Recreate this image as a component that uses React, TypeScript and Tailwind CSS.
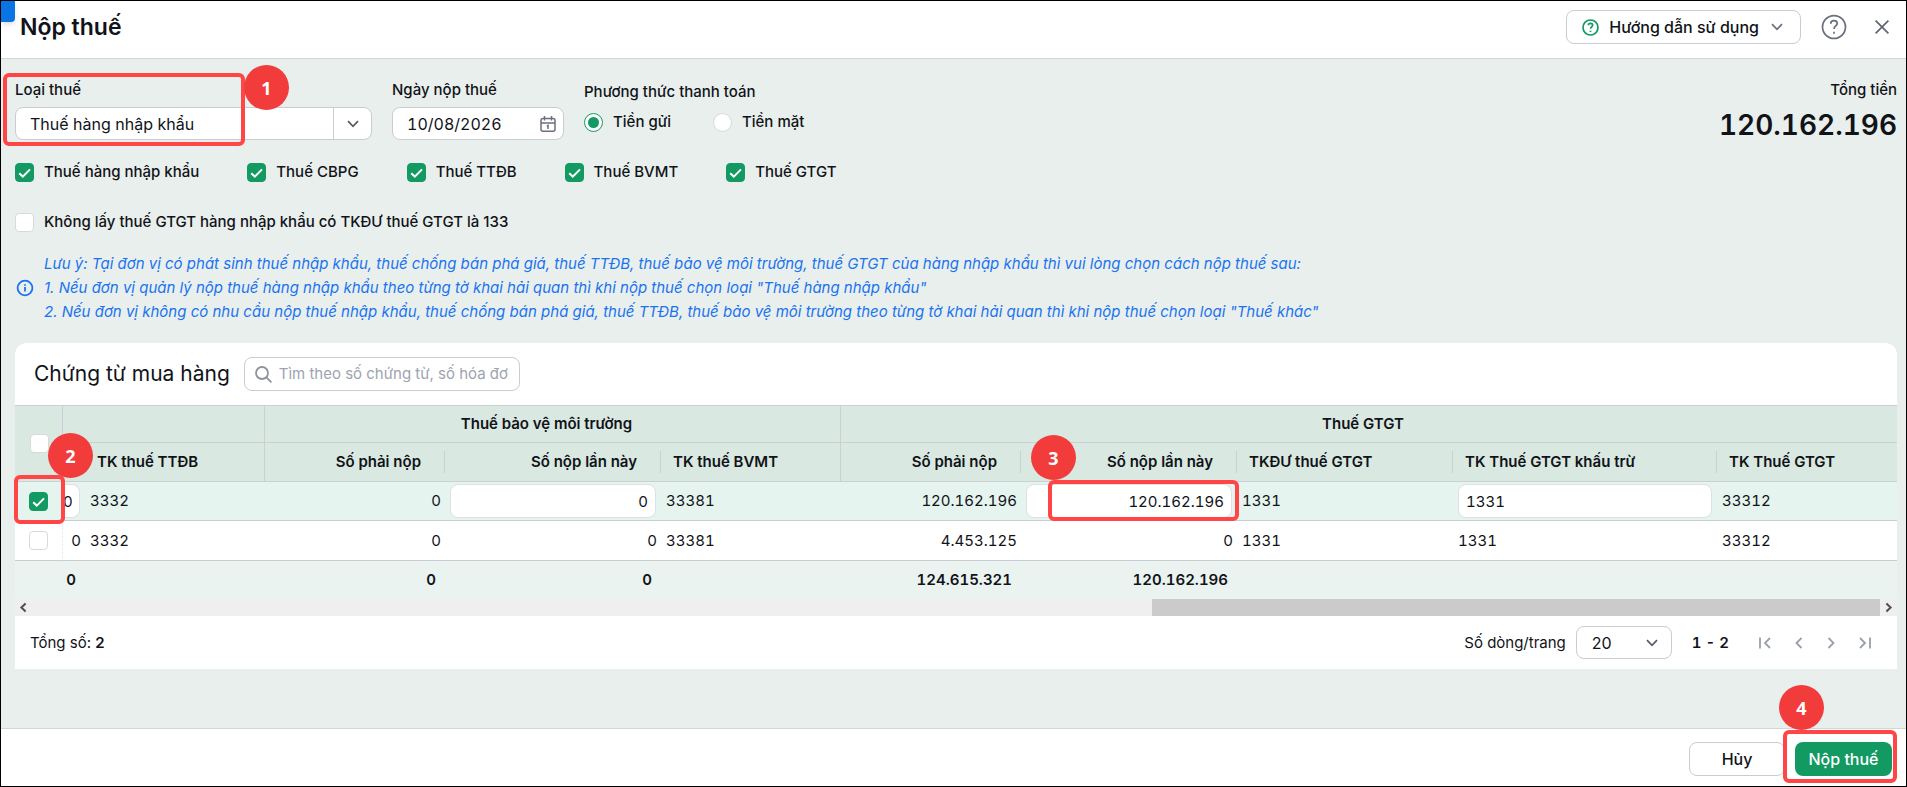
import type { InputHTMLAttributes, ReactNode } from 'react';
import { clsx } from 'clsx';

// Small building blocks

function Checkbox({ label, className, ...props }: { label?: string } & InputHTMLAttributes<HTMLInputElement>) {
  return (
    <label className={clsx('flex w-fit items-center gap-[10px]', className)}>
      <span className="grid size-[19px] shrink-0 place-items-center">
        <input
          type="checkbox"
          className="peer col-start-1 row-start-1 size-[19px] appearance-none rounded border border-[#d5dbd9] bg-white checked:border-[#129a62] checked:bg-[#129a62]"
          {...props}
        />
        <svg
          viewBox="0 0 19 19"
          className="pointer-events-none col-start-1 row-start-1 hidden size-[19px] peer-checked:block"
          fill="none"
          stroke="white"
          strokeWidth="2"
        >
          <path d="M4.2 10.2 7.8 13.6 15 6.4" />
        </svg>
      </span>
      {label && <span>{label}</span>}
    </label>
  );
}

function Radio({ label, ...props }: { label: string } & InputHTMLAttributes<HTMLInputElement>) {
  return (
    <label className="flex items-center gap-[10px]">
      <span className="grid size-[19px] place-items-center">
        <input
          type="radio"
          name="payment"
          className="peer col-start-1 row-start-1 size-[19px] appearance-none rounded-full border border-[#d5dbd9] bg-white checked:border-[#129a62]"
          {...props}
        />
        <span className="pointer-events-none col-start-1 row-start-1 hidden size-[11px] rounded-full bg-[#129a62] peer-checked:block" />
      </span>
      <span>{label}</span>
    </label>
  );
}

function Chevron({ className }: { className?: string }) {
  return (
    <svg viewBox="0 0 12 8" className={clsx('h-2 w-3', className)} fill="none" stroke="currentColor" strokeWidth="1.7">
      <path d="M1 1.2 6 6.3 11 1.2" />
    </svg>
  );
}

function HelpIcon({ className, strokeWidth }: { className: string; strokeWidth: number }) {
  return (
    <svg viewBox="0 0 24 24" className={className} fill="none" stroke="currentColor" strokeWidth={strokeWidth}>
      <circle cx="12" cy="12" r="10.6" />
      <path d="M9 8.9c0-1.7 1.3-2.8 3-2.8s3 1.1 3 2.7c0 2.1-3 2.4-3 5" />
      <path d="M12 16.4v1.9" />
    </svg>
  );
}

function Step({ n, className }: { n: number; className: string }) {
  return (
    <span
      className={clsx(
        "pointer-events-none absolute z-20 grid size-[45px] place-items-center rounded-full bg-[#f23c3c] font-['Open_Sans',sans-serif] text-lg font-bold text-white",
        className,
      )}
    >
      {n}
    </span>
  );
}

function Frame({ className }: { className: string }) {
  return <span className={clsx('pointer-events-none absolute z-10 rounded-md border-4 border-[#ff4545]', className)} />;
}

// Table parts

function GroupHead({ children, span, last }: { children?: ReactNode; span: number; last?: boolean }) {
  return (
    <th colSpan={span} className={clsx('h-[37px] border-b border-[#cdcfd6] font-semibold', !last && 'border-r')}>
      <div className="pr-3 text-center">{children}</div>
    </th>
  );
}

function Head({ children, right, edge = 'short' }: { children: ReactNode; right?: boolean; edge?: 'short' | 'full' | 'none' }) {
  return (
    <th className={clsx('h-[39px] border-b border-[#cdcfd6] p-0 font-semibold', edge === 'full' && 'border-r')}>
      <div
        className={clsx(
          'flex h-[22px] items-center border-[#cdcfd6]',
          right ? 'justify-end pr-[23px]' : 'pl-3',
          edge === 'short' && 'border-r',
        )}
      >
        {children}
      </div>
    </th>
  );
}

function Cell({ children, right }: { children?: ReactNode; right?: boolean }) {
  return (
    <td className={clsx('relative border-b border-[#c9cdd2]', right ? 'pr-1 text-right' : 'pl-[5px]')}>{children}</td>
  );
}

function CellInput({ right, ...props }: { right?: boolean } & InputHTMLAttributes<HTMLInputElement>) {
  return (
    <input
      className={clsx(
        'block h-[34px] w-full rounded-lg border border-[#e0e0e0] bg-white px-[7px] tabular-nums',
        right && 'text-right',
      )}
      {...props}
    />
  );
}

const taxes = ['Thuế hàng nhập khẩu', 'Thuế CBPG', 'Thuế TTĐB', 'Thuế BVMT', 'Thuế GTGT'];

export default function App() {
  return (
    <div className="relative flex min-h-screen flex-col border border-black bg-[#e9efed] font-['Inter',sans-serif] text-[15px] leading-6 text-[#111318]">
      <header className="flex h-[58px] items-center border-b border-[#d2d5d8] bg-white pr-[17px] pb-[5px] pl-[19px]">
        <span className="absolute top-0 left-0 h-[21px] w-[14px] rounded-br bg-[#0b74e5] shadow-md" />
        <h1 className="flex-1 text-[23px] font-semibold">Nộp thuế</h1>
        <button className="flex h-[34px] items-center gap-[10px] rounded-lg border border-[#c9ccd2] bg-white px-[15px] text-base font-medium">
          <HelpIcon className="size-[17px] text-[#129a62]" strokeWidth={2.4} />
          Hướng dẫn sử dụng
          <Chevron className="mx-[2px] text-[#6b7080]" />
        </button>
        <button className="ml-5 text-[#6b7080]" aria-label="Trợ giúp">
          <HelpIcon className="size-[26px]" strokeWidth={1.6} />
        </button>
        <button className="ml-7 text-[#5f6475]" aria-label="Đóng">
          <svg viewBox="0 0 14 14" className="size-[14px]" fill="none" stroke="currentColor" strokeWidth="1.7">
            <path d="M.6.6 13.4 13.4M13.4.6.6 13.4" />
          </svg>
        </button>
      </header>

      <main className="flex-1 pr-[9px] pl-[14px]">
        <section className="flex pt-[19px]">
          <div className="relative w-[357px]">
            <label htmlFor="tax-type" className="block pb-[5px] font-medium">
              Loại thuế
            </label>
            <div className="grid h-[33px] grid-cols-[1fr_38px] overflow-hidden rounded-lg border border-[#c9ccd2] bg-white text-base">
              <select id="tax-type" className="col-span-2 col-start-1 row-start-1 appearance-none pl-[14px]">
                <option>Thuế hàng nhập khẩu</option>
              </select>
              <span className="pointer-events-none col-start-2 row-start-1 grid place-items-center border-l border-[#c9ccd2]">
                <Chevron className="text-[#565b66]" />
              </span>
            </div>
            <Frame className="-top-[5px] -left-3 h-[73px] w-[242px]" />
            <Step n={1} className="-top-[13px] left-[229px]" />
          </div>
          <div className="ml-5 w-[172px]">
            <label htmlFor="tax-date" className="block pb-[5px] font-medium">
              Ngày nộp thuế
            </label>
            <div className="flex h-[33px] items-center rounded-lg border border-[#c9ccd2] bg-white pr-[7px] pl-[14px] text-base">
              <input id="tax-date" defaultValue="10/08/2026" className="w-full min-w-0 tabular-nums outline-none" />
              <svg viewBox="0 0 16 16" className="size-4 shrink-0 text-[#6b7080]" fill="none" stroke="currentColor" strokeWidth="1.5">
                <rect x="1" y="2.4" width="14" height="12.8" rx="2" />
                <path d="M1 7h14M4.5 0v4.4M11.5 0v4.4" />
                <path d="M6.8 10.3l1.2-.8v3.6" />
              </svg>
            </div>
          </div>
          <fieldset className="mt-[2px] ml-5 font-medium">
            <legend className="pb-[6px]">Phương thức thanh toán</legend>
            <div className="flex gap-[42px]">
              <Radio label="Tiền gửi" defaultChecked />
              <Radio label="Tiền mặt" />
            </div>
          </fieldset>
          <div className="ml-auto text-right">
            <p className="font-medium">Tổng tiền</p>
            <p className="text-[28px] leading-[46px] font-semibold tabular-nums">120.162.196</p>
          </div>
        </section>

        <div className="flex gap-12 pt-3 font-medium">
          {taxes.map((tax) => (
            <Checkbox key={tax} label={tax} defaultChecked />
          ))}
        </div>
        <Checkbox className="mt-[26px] font-medium" label="Không lấy thuế GTGT hàng nhập khẩu có TKĐƯ thuế GTGT là 133" />

        <div className="flex items-center gap-[10px] pt-[18px] text-[#1a73f0]">
          <svg viewBox="0 0 18 18" className="ml-px size-[18px]" fill="none" stroke="currentColor" strokeWidth="1.8">
            <circle cx="9" cy="9" r="7.4" />
            <path d="M9 8v4.6M9 5.2v1.6" />
          </svg>
          <p className="italic">
            Lưu ý: Tại đơn vị có phát sinh thuế nhập khẩu, thuế chống bán phá giá, thuế TTĐB, thuế bảo vệ môi trường, thuế
            GTGT của hàng nhập khẩu thì vui lòng chọn cách nộp thuế sau:
            <br />
            1. Nếu đơn vị quản lý nộp thuế hàng nhập khẩu theo từng tờ khai hải quan thì khi nộp thuế chọn loại "Thuế hàng
            nhập khẩu"
            <br />
            2. Nếu đơn vị không có nhu cầu nộp thuế nhập khẩu, thuế chống bán phá giá, thuế TTĐB, thuế bảo vệ môi trường
            theo từng tờ khai hải quan thì khi nộp thuế chọn loại "Thuế khác"
          </p>
        </div>

        <section className="mt-[19px] rounded-t-xl bg-white">
          <div className="flex h-[62px] items-center gap-[14px] px-[19px]">
            <h2 className="text-[21px]">Chứng từ mua hàng</h2>
            <label className="flex h-[34px] w-[276px] items-center gap-[7px] rounded-lg border border-[#c9ccd2] px-[10px]">
              <svg viewBox="0 0 17 17" className="size-[17px] shrink-0 text-[#8d93a1]" fill="none" stroke="currentColor" strokeWidth="1.8">
                <circle cx="7" cy="7" r="6" />
                <path d="m11.4 11.4 5 5" />
              </svg>
              <input
                aria-label="Tìm kiếm"
                placeholder="Tìm theo số chứng từ, số hóa đơn"
                className="w-full min-w-0 outline-none placeholder:text-[#9ea3b0]"
              />
            </label>
          </div>

          <table className="w-full table-fixed border-separate border-spacing-0 border-t border-[#cdcfd6] [&_td]:py-0">
            <colgroup>
              <col className="w-12" />
              <col className="w-[22px]" />
              <col className="w-[180px]" />
              <col className="w-[180px]" />
              <col className="w-[216px]" />
              <col className="w-[180px]" />
              <col className="w-[180px]" />
              <col className="w-[216px]" />
              <col className="w-[216px]" />
              <col className="w-[264px]" />
              <col />
            </colgroup>
            <thead className="bg-[#d9e8e1] text-left">
              <tr>
                <th rowSpan={2} className="border-r border-b border-[#cdcfd6] pl-[15px]">
                  <Checkbox aria-label="Chọn tất cả" />
                </th>
                <GroupHead span={2} />
                <GroupHead span={3}>Thuế bảo vệ môi trường</GroupHead>
                <GroupHead span={5} last>
                  Thuế GTGT
                </GroupHead>
              </tr>
              <tr>
                <th className="border-b border-[#cdcfd6]" />
                <Head edge="full">TK thuế TTĐB</Head>
                <Head right>Số phải nộp</Head>
                <Head right>Số nộp lần này</Head>
                <Head edge="full">TK thuế BVMT</Head>
                <Head right>Số phải nộp</Head>
                <Head right>Số nộp lần này</Head>
                <Head>TKĐƯ thuế GTGT</Head>
                <Head>TK Thuế GTGT khấu trừ</Head>
                <Head edge="none">TK Thuế GTGT</Head>
              </tr>
            </thead>
            <tbody className="tabular-nums">
              <tr className="h-[39px] bg-[#e5f4ef]">
                <td className="relative border-b border-[#c9cdd2] pl-[14px]">
                  <Checkbox aria-label="Chọn chứng từ 1" defaultChecked />
                  <Frame className="-top-[7px] -left-px h-[49px] w-[51px]" />
                  <Step n={2} className="-top-[49px] left-[33px]" />
                </td>
                <td className="border-b border-[#c9cdd2] pr-[5px]">
                  <input
                    aria-label="Số nộp lần này TTĐB"
                    defaultValue="0"
                    className="block h-[34px] w-full rounded-r-lg border border-l-0 border-[#e0e0e0] bg-white pr-[7px] text-right"
                  />
                </td>
                <Cell>3332</Cell>
                <Cell right>0</Cell>
                <td className="border-b border-[#c9cdd2] px-[5px]">
                  <CellInput right aria-label="Số nộp lần này BVMT" defaultValue="0" />
                </td>
                <Cell>33381</Cell>
                <Cell right>120.162.196</Cell>
                <td className="relative border-b border-[#c9cdd2] px-[5px]">
                  <CellInput right aria-label="Số nộp lần này GTGT" defaultValue="120.162.196" />
                  <Frame className="-top-[2px] left-[27px] h-[41px] w-[191px]" />
                  <Step n={3} className="-top-[47px] left-[10px]" />
                </td>
                <Cell>1331</Cell>
                <td className="border-b border-[#c9cdd2] px-[5px]">
                  <CellInput aria-label="TK thuế GTGT khấu trừ" defaultValue="1331" />
                </td>
                <Cell>33312</Cell>
              </tr>
              <tr className="h-10">
                <td className="border-r border-b border-[#c9cdd2] border-r-[#e3e3e6] [border-right-style:dotted] pl-[14px]">
                  <Checkbox aria-label="Chọn chứng từ 2" />
                </td>
                <Cell right>0</Cell>
                <Cell>3332</Cell>
                <Cell right>0</Cell>
                <Cell right>0</Cell>
                <Cell>33381</Cell>
                <Cell right>4.453.125</Cell>
                <Cell right>0</Cell>
                <Cell>1331</Cell>
                <Cell>1331</Cell>
                <Cell>33312</Cell>
              </tr>
            </tbody>
            <tfoot className="text-right font-semibold tabular-nums">
              <tr className="h-[38px] bg-[#eaf3f0] [&>td]:pr-[9px]">
                <td />
                <td>0</td>
                <td />
                <td>0</td>
                <td>0</td>
                <td />
                <td>124.615.321</td>
                <td>120.162.196</td>
                <td colSpan={3} />
              </tr>
            </tfoot>
          </table>

          {/* horizontal scroll bar */}
          <div className="flex h-[17px] items-center bg-[#efefef] text-[#505050]">
            <svg viewBox="0 0 17 17" className="size-[17px]" fill="none" stroke="currentColor" strokeWidth="2">
              <path d="M10.6 4.5 6.4 8.5l4.2 4" />
            </svg>
            <div className="flex h-full flex-1 justify-end">
              <div className="h-full w-[39.4%] bg-[#cbcbcb]" />
            </div>
            <svg viewBox="0 0 17 17" className="size-[17px]" fill="none" stroke="currentColor" strokeWidth="2">
              <path d="m6.4 4.5 4.2 4-4.2 4" />
            </svg>
          </div>

          <div className="flex h-[53px] items-center pr-[22px] pl-[15px]">
            <p className="flex-1">
              Tổng số: <b className="font-semibold">2</b>
            </p>
            <label htmlFor="page-size">Số dòng/trang</label>
            <div className="ml-[10px] grid h-[33px] w-24 grid-cols-[1fr_38px] items-center rounded-lg border border-[#c9ccd2] text-base">
              <select id="page-size" className="col-span-2 col-start-1 row-start-1 h-full appearance-none pl-[15px]">
                <option>20</option>
              </select>
              <Chevron className="pointer-events-none col-start-2 row-start-1 justify-self-center text-[#565b66]" />
            </div>
            <span className="mr-[26px] ml-5 font-semibold tabular-nums">1 - 2</span>
            <nav className="flex gap-4 text-[#9a9fac]">
              {[
                ['Trang đầu', 'M5 3.5v11M15 4 10 9l5 5'],
                ['Trang trước', 'M12.5 4 7.5 9l5 5'],
                ['Trang sau', 'm5.5 4 5 5-5 5'],
                ['Trang cuối', 'm3 4 5 5-5 5M13 3.5v11'],
              ].map(([name, d]) => (
                <button key={name} aria-label={name}>
                  <svg viewBox="0 0 18 18" className="size-[18px]" fill="none" stroke="currentColor" strokeWidth="1.8">
                    <path d={d} />
                  </svg>
                </button>
              ))}
            </nav>
          </div>
        </section>
      </main>

      <footer className="flex h-[58px] items-start justify-end gap-[10px] border-t border-[#d2d5d8] bg-white pt-[13px] pr-[14px] text-base font-medium">
        <button className="h-[34px] w-24 rounded-lg border border-[#c9ccd2]">Hủy</button>
        <div className="relative">
          <button className="h-[34px] w-[97px] rounded-lg bg-[#129a62] text-white">Nộp thuế</button>
          <Frame className="-top-3 -right-[5px] -left-3 h-[53px]" />
          <Step n={4} className="-top-[57px] -left-4" />
        </div>
      </footer>
    </div>
  );
}
